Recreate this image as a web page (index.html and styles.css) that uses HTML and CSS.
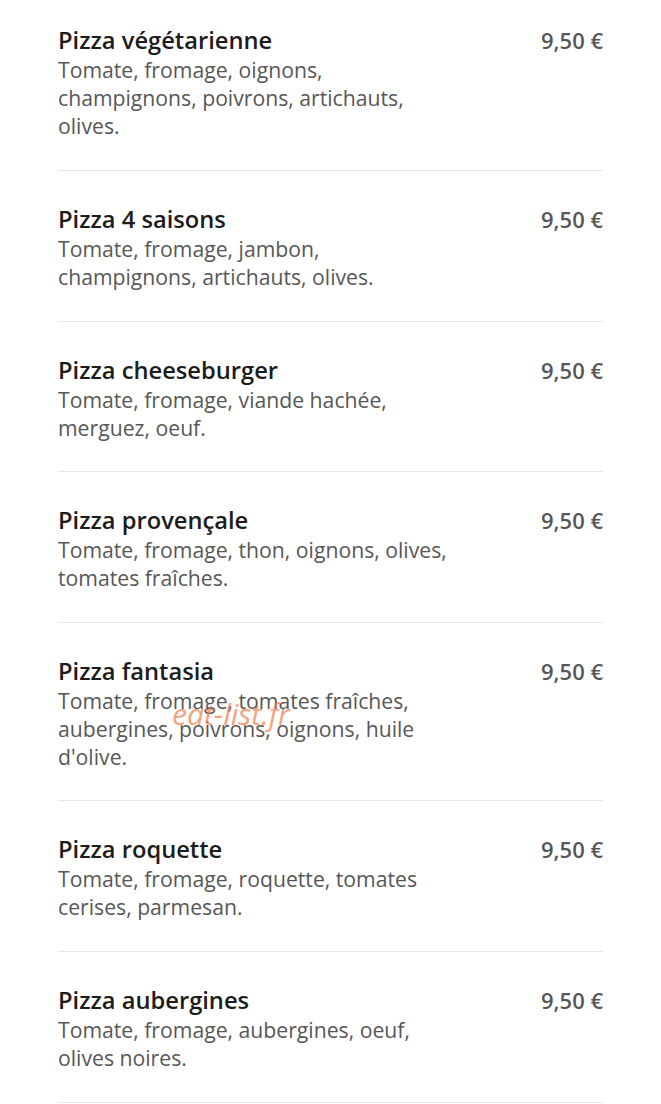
FILE: index.html
```html
<!DOCTYPE html>
<html lang="fr">
<head>
  <meta charset="UTF-8" />
  <meta name="viewport" content="width=device-width, initial-scale=1.0"/>
  <title>Pizzas | eat-list.fr</title>
  <link rel="stylesheet" href="styles.css">
</head>
<body>
  <ul class="menu">
    <li class="item">
      <div class="info">
        <h3>Pizza végétarienne</h3>
        <p>Tomate, fromage, oignons, champignons, poivrons, artichauts, olives.</p>
      </div>
      <span class="price">9,50 €</span>
    </li>
    <li class="item">
      <div class="info">
        <h3>Pizza 4 saisons</h3>
        <p>Tomate, fromage, jambon, champignons, artichauts, olives.</p>
      </div>
      <span class="price">9,50 €</span>
    </li>
    <li class="item">
      <div class="info">
        <h3>Pizza cheeseburger</h3>
        <p>Tomate, fromage, viande hachée, merguez, oeuf.</p>
      </div>
      <span class="price">9,50 €</span>
    </li>
    <li class="item">
      <div class="info">
        <h3>Pizza provençale</h3>
        <p>Tomate, fromage, thon, oignons, olives, tomates fraîches.</p>
      </div>
      <span class="price">9,50 €</span>
    </li>
    <li class="item">
      <div class="info">
        <h3>Pizza fantasia</h3>
        <p>Tomate, fromage, tomates fraîches, aubergines, poivrons, oignons, huile d'olive.</p>
        <span class="watermark">eat-list.fr</span>
      </div>
      <span class="price">9,50 €</span>
    </li>
    <li class="item">
      <div class="info">
        <h3>Pizza roquette</h3>
        <p>Tomate, fromage, roquette, tomates cerises, parmesan.</p>
      </div>
      <span class="price">9,50 €</span>
    </li>
    <li class="item">
      <div class="info">
        <h3>Pizza aubergines</h3>
        <p>Tomate, fromage, aubergines, oeuf, olives noires.</p>
      </div>
      <span class="price">9,50 €</span>
    </li>
  </ul>
</body>
</html>
```

FILE: styles.css
```css
:root {
  --title: #1c1c1c;
  --text: #575757;
  --line: #e6e6e6;
  --white: #ffffff;
}
* { box-sizing: border-box; margin: 0; padding: 0; }
body {
  font-family: 'Open Sans', 'Noto Sans', sans-serif;
  background: var(--white);
  color: var(--text);
}
.menu {
  list-style: none;
  margin: 0 58px;
}
.item {
  display: flex;
  justify-content: space-between;
  align-items: flex-start;
  padding: 33px 0 29.6px;
  border-bottom: 1px solid var(--line);
}
.item:first-child { padding-top: 25.4px; }
.info { position: relative; max-width: 398px; }
.info h3 {
  font-size: 23.7px;
  font-weight: 600;
  line-height: 31px;
  color: var(--title);
}
.info p {
  font-size: 21.2px;
  line-height: 28px;
}
.price {
  font-size: 22px;
  font-weight: 600;
  line-height: 31px;
  color: var(--text);
}
.watermark {
  position: absolute;
  left: 114px;
  top: 37px;
  font-size: 30px;
  font-style: italic;
  color: rgba(240, 120, 70, 0.7);
}
```
